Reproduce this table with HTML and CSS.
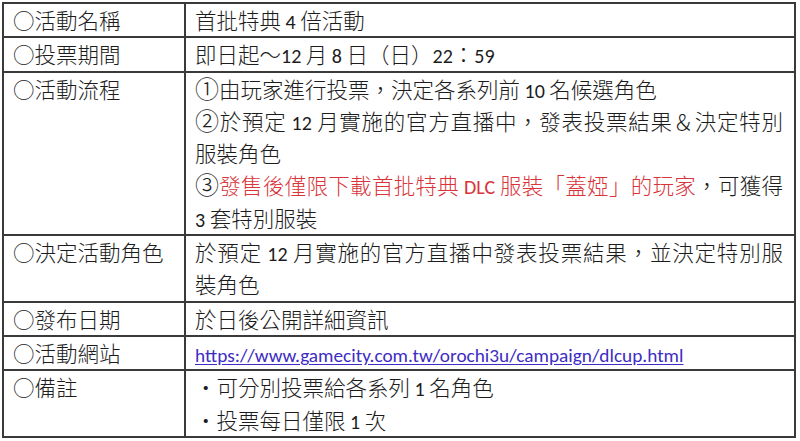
FILE: index.html
```html
<!DOCTYPE html>
<html lang="zh-Hant">
<head>
<meta charset="utf-8">
<title>活動資訊</title>
<link rel="stylesheet" href="styles.css">
</head>
<body>
<table class="info">
  <colgroup><col class="c1"><col class="c2"></colgroup>
  <tr><th>○活動名稱</th><td>首批特典<span class="lat"> 4 </span>倍活動</td></tr>
  <tr><th>○投票期間</th><td>即日起～<span class="lat">12 </span>月<span class="lat"> 8 </span>日（日）<span class="lat">22</span>：<span class="lat">59</span></td></tr>
  <tr><th>○活動流程</th><td>
    <div class="ln"><span class="num">①</span>由玩家進行投票，決定各系列前<span class="lat"> 10 </span>名候選角色</div>
    <div class="ln full"><span class="num">②</span>於預定<span class="lat"> 12 </span>月實施的官方直播中，發表投票結果＆決定特別</div>
    <div class="ln">服裝角色</div>
    <div class="ln full"><span class="num">③</span><span class="red">發售後僅限下載首批特典<span class="lat"> DLC </span>服裝「蓋婭」的玩家</span>，可獲得</div>
    <div class="ln"><span class="lat">3 </span>套特別服裝</div>
  </td></tr>
  <tr><th>○決定活動角色</th><td>
    <div class="ln full">於預定<span class="lat"> 12 </span>月實施的官方直播中發表投票結果，並決定特別服</div>
    <div class="ln">裝角色</div>
  </td></tr>
  <tr><th>○發布日期</th><td>於日後公開詳細資訊</td></tr>
  <tr><th>○活動網站</th><td><a class="link" href="#">https://www.gamecity.com.tw/orochi3u/campaign/dlcup.html</a></td></tr>
  <tr><th>○備註</th><td>
    <div class="ln">・可分別投票給各系列<span class="lat"> 1 </span>名角色</div>
    <div class="ln">・投票每日僅限<span class="lat"> 1 </span>次</div>
  </td></tr>
</table>
</body>
</html>
```

FILE: styles.css
```css
html, body {
  margin: 0;
  padding: 0;
  background: #ffffff;
}
body {
  padding: 2px 0 0 2px;
  font-family: "Noto Sans CJK TC", "Noto Sans CJK SC", sans-serif;
  font-size: 21.5px;
  font-weight: 300;
  color: #1c1c1c;
}
.info {
  border-collapse: collapse;
  table-layout: fixed;
  width: 792px;
}
.c1 { width: 182px; }
.c2 { width: 610px; }
.info th,
.info td {
  border: 2px solid #3a3a3a;
  padding: 0 11px 0 9px;
  line-height: 32.3px;
  height: 32.3px;
  vertical-align: top;
  text-align: left;
  font-weight: 300;
  white-space: nowrap;
}
.ln {
  display: block;
  height: 32.3px;
}
.full {
  text-align: justify;
  text-align-last: justify;
}
.lat {
  font-family: Carlito, Lato, "Liberation Sans", sans-serif;
  font-size: 20px;
  font-weight: 400;
  line-height: 1;
}
.num {
  font-size: 24px;
  line-height: 1;
}
.red { color: #d9343a; }
.link {
  font-family: Carlito, Lato, "Liberation Sans", sans-serif;
  font-size: 19.3px;
  font-weight: 400;
  line-height: 1;
  color: #3d2cc4;
  text-decoration: underline;
  text-underline-offset: 2px;
}
```
